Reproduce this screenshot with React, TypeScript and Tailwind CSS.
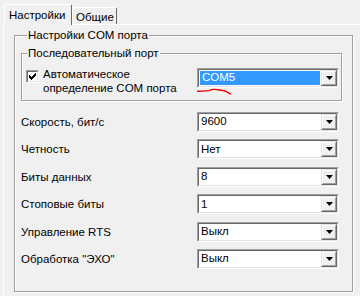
import React from 'react';

const FONT = "font-['Liberation_Sans',Arial,sans-serif]";

const Checkbox: React.FC<{ checked?: boolean }> = ({ checked }) => (
  <div className="h-[13px] w-[13px] shrink-0 border border-[#a0a0a0] border-r-white border-b-white">
    <div className="h-full w-full border border-[#696969] border-r-[#e3e3e3] border-b-[#e3e3e3] bg-white">
      {checked && (
        <svg width="9" height="9" viewBox="0 0 9 9" className="block">
          <path d="M1 3v3h1v1h1v1h1V7h1V6h1V5h1V4h1V1H7v1H6v1H5v1H4v1H3V4H2V3z" fill="#000" />
        </svg>
      )}
    </div>
  </div>
);

const ComboBox: React.FC<{ value: string; selected?: boolean }> = ({ value, selected }) => (
  <div className="h-[20px] w-[142px] border border-[#a0a0a0] border-r-white border-b-white">
    <div className="flex h-full border border-[#696969] border-r-[#e3e3e3] border-b-[#e3e3e3] bg-white">
      <div className="flex min-w-0 flex-1 p-[1px]">
        <div
          className={
            selected
              ? 'flex flex-1 items-center bg-[#3399ff] pl-[2px] text-white'
              : 'flex flex-1 items-center pl-[1px] text-black'
          }
        >
          {value}
        </div>
      </div>
      <div className="w-[16px] border border-[#e3e3e3] border-r-[#696969] border-b-[#696969] bg-[#f0f0f0]">
        <div className="flex h-full items-center justify-center border border-white border-r-[#a0a0a0] border-b-[#a0a0a0]">
          <svg width="7" height="4" viewBox="0 0 7 4" className="block">
            <path d="M0 0h7L3.5 4z" fill="#000" />
          </svg>
        </div>
      </div>
    </div>
  </div>
);

const GroupBox: React.FC<{ title: string; className?: string; children: React.ReactNode; legendMargin: string }> = ({
  title,
  className,
  children,
  legendMargin,
}) => (
  <div
    className={`flex flex-col border border-[#a0a0a0] shadow-[inset_1px_1px_0_#fff,1px_1px_0_#fff] ${className ?? ''}`}
  >
    <div className={`-mt-[8px] self-start bg-[#f0f0f0] px-[1px] leading-[14px] ${legendMargin}`}>{title}</div>
    {children}
  </div>
);

const rows = [
  { label: 'Скорость, бит/с', value: '9600' },
  { label: 'Четность', value: 'Нет' },
  { label: 'Биты данных', value: '8' },
  { label: 'Стоповые биты', value: '1' },
  { label: 'Управление RTS', value: 'Выкл' },
  { label: 'Обработка "ЭХО"', value: 'Выкл' },
];

export default function App() {
  return (
    <div className={`h-[296px] w-[360px] overflow-hidden bg-[#f0f0f0] pl-[3px] text-[11.5px] text-black ${FONT}`}>
      {/* Tabs */}
      <div className="relative z-10 flex h-[24px] items-end pl-[1px]">
        <div className="-mb-[1px] h-[21px] w-[68px] rounded-t-[2px] border border-b-0 border-white border-r-[#696969] bg-[#f0f0f0] pl-[4px] leading-[20px]">
          Настройки
        </div>
        <div className="h-[17px] w-[45px] rounded-t-[2px] border border-b-0 border-white border-r-[#696969] pl-[3px] leading-[18px]">
          Общие
        </div>
      </div>

      {/* Tab page */}
      <div className="h-[300px] border-t border-l border-white pl-[10px] pt-[10px]">
        <GroupBox title="Настройки COM порта" legendMargin="ml-[6px]" className="h-[257px] w-[339px] pl-[6px] pr-[10px]">
          <GroupBox
            title="Последовательный порт"
            legendMargin="ml-[5px]"
            className="mt-[11px] h-[48px] w-[321px] pb-[5px]"
          >
            <div className="mt-[7px] flex items-start">
              <div className="ml-[4px] mt-[3px]">
                <Checkbox checked />
              </div>
              <div className="ml-[4px] leading-[14px]">
                Автоматическое
                <br />
                определение COM порта
              </div>
              <div className="relative ml-auto mr-[2px] mt-[1px]">
                <ComboBox value="COM5" selected />
                <svg width="36" height="8" viewBox="0 0 36 8" className="absolute left-0 top-[20px]">
                  <path
                    d="M0.5 3.2C5 3 9 3.2 12 2.6C15 1 18 1.2 21 1.8C24 2.4 27 2.2 29 3.4C30.5 4.2 32 5 33.5 6"
                    fill="none"
                    stroke="#f00000"
                    strokeWidth="1.4"
                    strokeLinecap="round"
                  />
                </svg>
              </div>
            </div>
          </GroupBox>

          <div className="mt-[11px] grid grid-cols-[176px_142px] gap-y-[7.4px]">
            {rows.map((r, i) => (
              <React.Fragment key={i}>
                <div className="flex items-center leading-[14px]">{r.label}</div>
                <ComboBox value={r.value} />
              </React.Fragment>
            ))}
          </div>
        </GroupBox>
      </div>
    </div>
  );
}
